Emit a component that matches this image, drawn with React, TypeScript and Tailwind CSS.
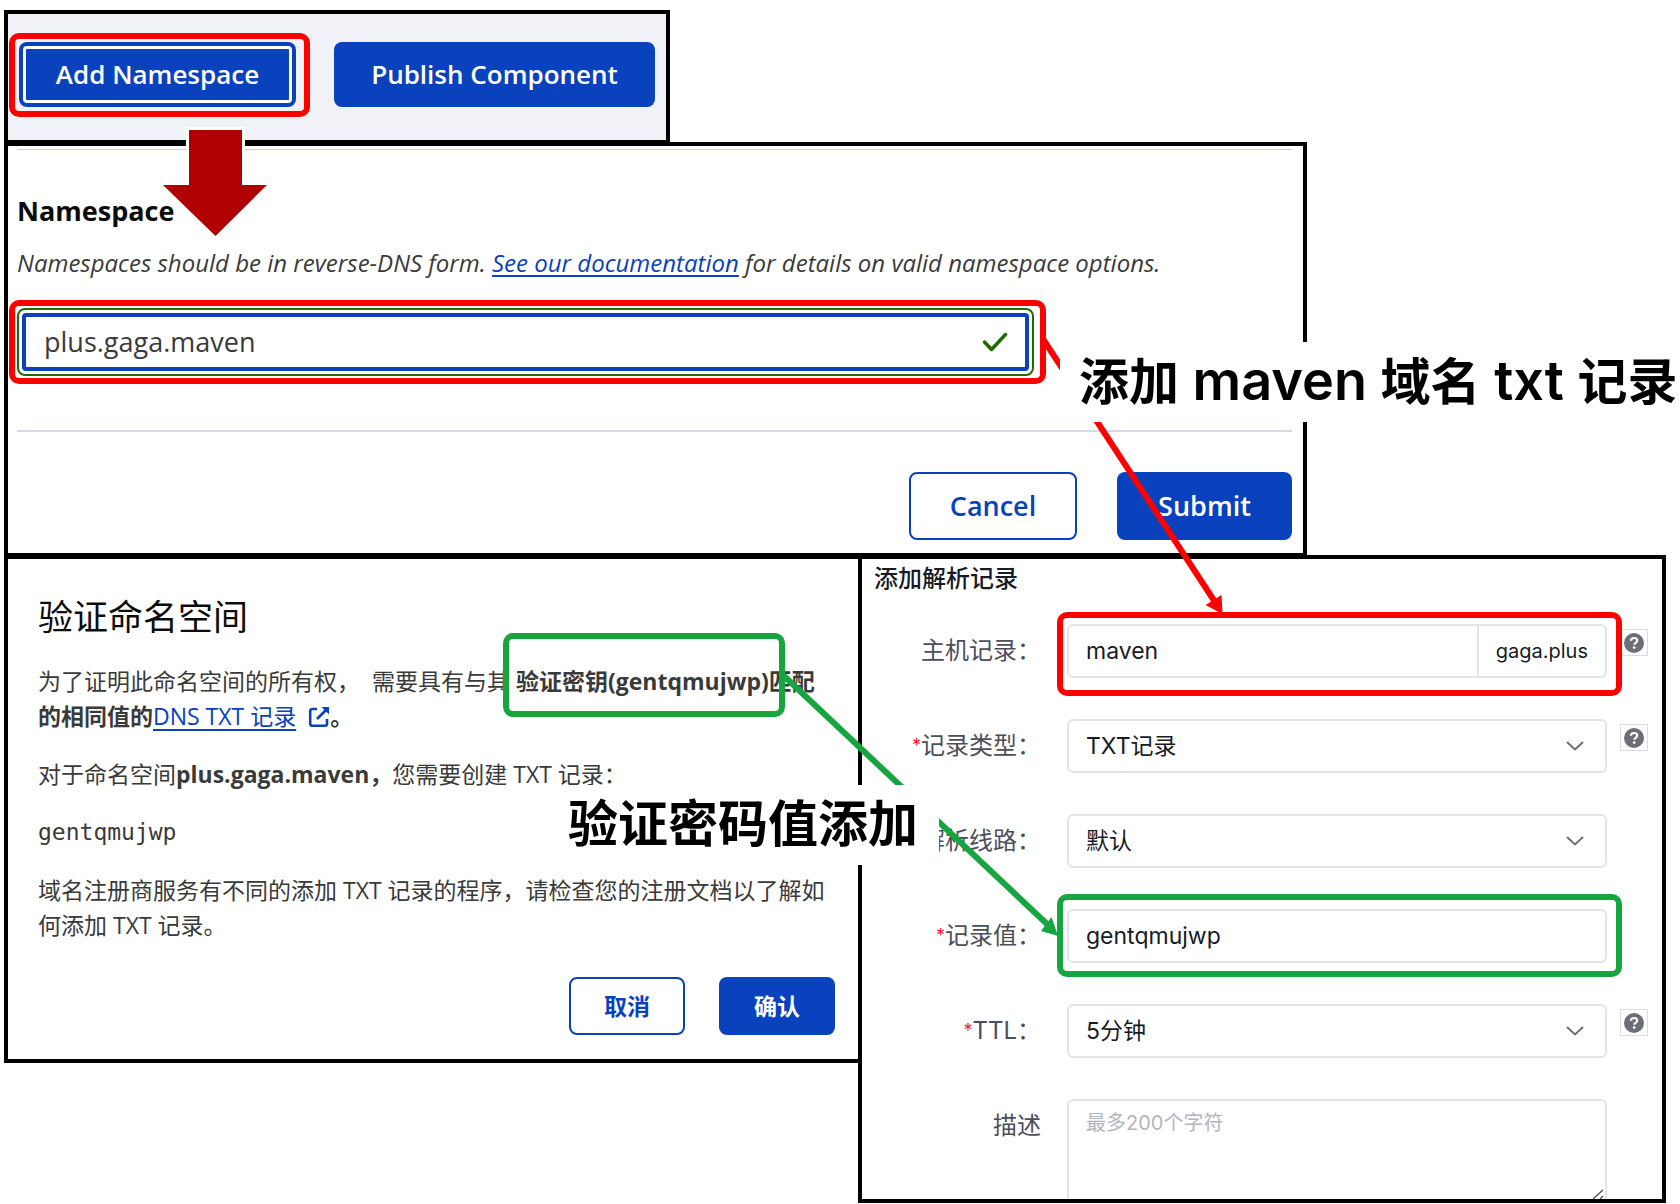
import type { ReactNode } from "react";

const latin = "font-['Open_Sans','Noto_Sans_CJK_SC',sans-serif]";
const record = "font-['Inter','Noto_Sans_CJK_SC',sans-serif]";

function HelpBadge() {
  return (
    <button type="button" aria-label="帮助" className="mt-[5px] flex h-[27px] w-7 items-center justify-center border border-[#dcdde2] bg-white">
      <svg viewBox="0 0 20 20" className="size-5" aria-hidden="true">
        <circle cx="10" cy="10" r="10" fill="#6d6f78" />
        <path d="M6.9 7.7C7 5.9 8.3 5 10.1 5c1.8 0 3.1 1 3.1 2.5 0 1.2-.7 1.8-1.6 2.4-.9.5-1.3.9-1.3 1.8" fill="none" stroke="#fff" strokeWidth="2.2" />
        <circle cx="10.2" cy="14.6" r="1.4" fill="#fff" />
      </svg>
    </button>
  );
}

function Row({ id, label, required, help, children }: { id: string; label: string; required?: boolean; help?: boolean; children: ReactNode }) {
  return (
    <div className="flex items-start">
      <label htmlFor={id} className="mr-[26px] flex h-[54px] w-[179px] shrink-0 items-center justify-end whitespace-nowrap text-2xl text-[#4c4e5a]">
        {required && <span className="text-lg text-[#f5222d]">*</span>}
        {label}
      </label>
      <div className="relative min-w-0 flex-1">{children}</div>
      <div className="mr-[14px] ml-[13px] w-7 shrink-0">{help && <HelpBadge />}</div>
    </div>
  );
}

const field = "h-[54px] w-full rounded-md border-2 border-[#e3e4e8] bg-white px-[17px] text-[23px] text-[#171b26] outline-none";

function Select({ id, value }: { id: string; value: string }) {
  return (
    <>
      <select id={id} defaultValue={value} className={`${field} block appearance-none`}>
        <option>{value}</option>
      </select>
      <svg viewBox="0 0 18 10" className="pointer-events-none absolute top-[22px] right-[23px] h-[10px] w-[18px]" fill="none" stroke="#6d6f78" strokeWidth="2" aria-hidden="true">
        <path d="M1 1l8 7.500 8-7.500" />
      </svg>
    </>
  );
}

export default function App() {
  return (
    <main className={`relative overflow-hidden bg-white pt-[10px] pr-[14px] pb-px pl-1 ${latin}`}>
      {/* Toolbar */}
      <section className="w-[666px] max-w-full border-4 border-black bg-[#f0f2f8] pt-7 pb-[33px] pl-[11px]">
        <div className="flex gap-[38px] text-[26px] font-semibold text-white">
          <div className="relative">
            <button type="button" className="h-[65px] w-[277px] rounded-lg bg-[#0a41bd] p-1">
              <span className="flex h-full items-center justify-center rounded-sm border-[3px] border-white">Add Namespace</span>
            </button>
            <div className="pointer-events-none absolute -top-[9px] -right-[14px] -bottom-[10px] -left-[10px] rounded-[10px] border-6 border-[#ff0000]" />
          </div>
          <button type="button" className="h-[65px] w-[321px] rounded-lg bg-[#0a41bd]">Publish Component</button>
        </div>
      </section>

      {/* Namespace form */}
      <section className="-mt-0.5 w-[1303px] max-w-full border-4 border-black bg-white pt-[3px] pr-[11px] pb-[13px] pl-[9px]">
        <div className="h-px bg-[#c9c9e8]" />
        <label htmlFor="namespace" className="mt-[43px] block text-[27px] leading-9 font-bold text-[#0c0c0c]">Namespace</label>
        <p className="mt-4 text-2xl leading-9 whitespace-nowrap text-[#3a3a3a] italic">
          Namespaces should be in reverse-DNS form.{" "}
          <a href="#documentation" className="text-[#0a41bd] underline decoration-2 underline-offset-3">See our documentation</a> for details on valid namespace options.
        </p>
        <div className="relative mt-[27px] h-[68px] w-full max-w-[1017px] rounded-lg border-2 border-[#24690c] p-[3px]">
          <input id="namespace" defaultValue="plus.gaga.maven" className="h-full w-full rounded-sm border-4 border-[#0a41bd] pr-16 pb-0.5 pl-[18px] text-[27px] text-[#3a3a3a] outline-none" />
          <svg viewBox="0 0 26 20" className="pointer-events-none absolute top-[22px] right-6 h-5 w-[26px]" fill="none" stroke="#1f6a00" strokeWidth="3.500" strokeLinecap="round" strokeLinejoin="round" aria-hidden="true">
            <path d="M2.500 10l7 7.500L23.500 2.500" />
          </svg>
          <div className="pointer-events-none absolute -top-[10px] -right-[14px] -bottom-[10px] -left-[10px] rounded-[10px] border-6 border-[#ff0000]" />
        </div>
        <div className="mt-[54px] h-0.5 bg-[#d6d6f0]" />
        <div className="mt-10 flex justify-end gap-10 text-[27px] font-semibold">
          <button type="button" className="h-[68px] w-[168px] rounded-lg border-2 border-[#0a41bd] text-[#0a41bd]">Cancel</button>
          <button type="button" className="h-[68px] w-[175px] rounded-lg bg-[#0a41bd] text-white">Submit</button>
        </div>
      </section>

      <div className="-mt-0.5 flex items-start">
        {/* Verification dialog */}
        <section className="min-w-0 flex-1 border-4 border-r-0 border-black bg-white pt-9 pr-[23px] pb-6 pl-[30px] text-[23px] leading-[35px] text-[#3a3a3a]">
          <h2 className="text-[35px] leading-[44px] text-[#0c0c0c]">验证命名空间</h2>
          <div className="mt-[25px] flex flex-col gap-[23px] whitespace-nowrap">
            <p>
              为了证明此命名空间的所有权，&nbsp; 需要具有与其{" "}
              <strong className="font-bold">
                <span className="relative inline-block">
                  验证密钥(gentqmujwp)
                  <span className="pointer-events-none absolute -top-[31px] -right-4 -bottom-[18px] -left-[13px] z-10 rounded-[10px] border-6 border-[#17a53f]" />
                </span>
                匹配
                <br />
                的相同值的
              </strong>
              <a href="#dns" className="text-[#0a41bd]">
                <span className="underline decoration-2 underline-offset-4">DNS TXT 记录</span>
                <svg viewBox="0 0 22 22" className="ml-3 inline size-[22px] align-[-3px]" fill="none" stroke="#0a41bd" strokeWidth="2.600" aria-hidden="true">
                  <path d="M9 3H4.200A2 2 0 0 0 2.200 5v12.800a2 2 0 0 0 2 2H17a2 2 0 0 0 2-2V13" />
                  <path d="M9 13L19 3" />
                  <path d="M13.500 1H21v7.500z" fill="#0a41bd" stroke="none" />
                </svg>
              </a>
              <strong>。</strong>
            </p>
            <p>
              对于命名空间<strong>plus.gaga.maven，</strong>您需要创建 TXT 记录：
            </p>
            <p className="font-['DejaVu_Sans_Mono',monospace]">gentqmujwp</p>
            <p>
              域名注册商服务有不同的添加 TXT 记录的程序，请检查您的注册文档以了解如
              <br />
              何添加 TXT 记录。
            </p>
          </div>
          <div className="mt-[34px] flex justify-end gap-[34px] font-bold">
            <button type="button" className="h-[58px] w-[116px] rounded-lg border-2 border-[#0a41bd] text-[#0a41bd]">取消</button>
            <button type="button" className="h-[58px] w-[116px] rounded-lg bg-[#0a41bd] text-white">确认</button>
          </div>
        </section>

        {/* DNS record form */}
        <section className={`w-[808px] shrink-0 border-4 border-black bg-white pt-1 ${record}`}>
          <h2 className="pl-3 text-2xl leading-8 font-medium text-[#171b26]">添加解析记录</h2>
          <form className="mt-[29px] flex flex-col gap-[41px]">
            <Row id="host" label="主机记录：" help>
              <div className="flex">
                <input id="host" defaultValue="maven" className={`${field} rounded-r-none`} />
                <span className="-ml-0.5 flex h-[54px] shrink-0 items-center rounded-r-md border-2 border-[#e3e4e8] px-[17px] text-xl text-[#171b26]">gaga.plus</span>
              </div>
              <div className="pointer-events-none absolute -top-3 -right-[15px] -left-[10px] h-[84px] rounded-[10px] border-6 border-[#ff0000]" />
            </Row>
            <Row id="type" label="记录类型：" required help>
              <Select id="type" value="TXT记录" />
            </Row>
            <Row id="line" label="解析线路：" required>
              <Select id="line" value="默认" />
            </Row>
            <Row id="value" label="记录值：" required>
              <input id="value" defaultValue="gentqmujwp" className={`${field} block`} />
              <div className="pointer-events-none absolute -top-[15px] -right-[15px] -left-[10px] h-[83px] rounded-[10px] border-6 border-[#17a53f]" />
            </Row>
            <Row id="ttl" label="TTL：" required help>
              <Select id="ttl" value="5分钟" />
            </Row>
            <Row id="desc" label="描述">
              <textarea id="desc" placeholder="最多200个字符" className="block h-[100px] w-full resize-none rounded-t-md border-2 border-b-0 border-[#e3e4e8] px-[17px] py-1.5 text-xl leading-8 outline-none placeholder:text-[#b3b5bd]" />
              <svg viewBox="0 0 12 10" className="pointer-events-none absolute right-[3px] bottom-0 h-[10px] w-3" stroke="#444" strokeWidth="1.200" aria-hidden="true">
                <path d="M1 10L11 1M8 10l3-3" />
              </svg>
            </Row>
          </form>
        </section>
      </div>

      {/* Annotation arrows and captions */}
      <svg width="1680" height="1204" viewBox="0 0 1680 1204" className="pointer-events-none absolute top-0 left-0 max-w-none" aria-hidden="true">
        <path d="M189 130H242V185H267L215.500 236L163 185H189Z" fill="#b00000" stroke="#fff" strokeWidth="6" paintOrder="stroke" />
        <path d="M1043 339L1215 602" stroke="#ff0000" strokeWidth="6" />
        <path d="M1222.500 614L1205.500 605L1221.500 595Z" fill="#ff0000" />
        <path d="M784 676L1047 924" stroke="#17a53f" strokeWidth="6" />
        <path d="M1058 936L1041 931L1051.500 917Z" fill="#17a53f" />
      </svg>
      <p className="absolute top-[342px] left-[1060px] h-20 bg-white pl-[19px] font-['Inter','Noto_Sans_CJK_SC',sans-serif] text-[50px] leading-[78px] font-bold whitespace-nowrap text-black">
        添加<span className="text-[54px] font-semibold"> maven </span>域名<span className="text-[54px] font-semibold"> txt </span>记录
      </p>
      <p className="absolute top-[785px] left-[549px] h-20 bg-white pr-[21px] pl-[19px] font-['Inter','Noto_Sans_CJK_SC',sans-serif] text-[50px] leading-[78px] font-bold whitespace-nowrap text-black">
        验证密码值添加
      </p>
    </main>
  );
}
